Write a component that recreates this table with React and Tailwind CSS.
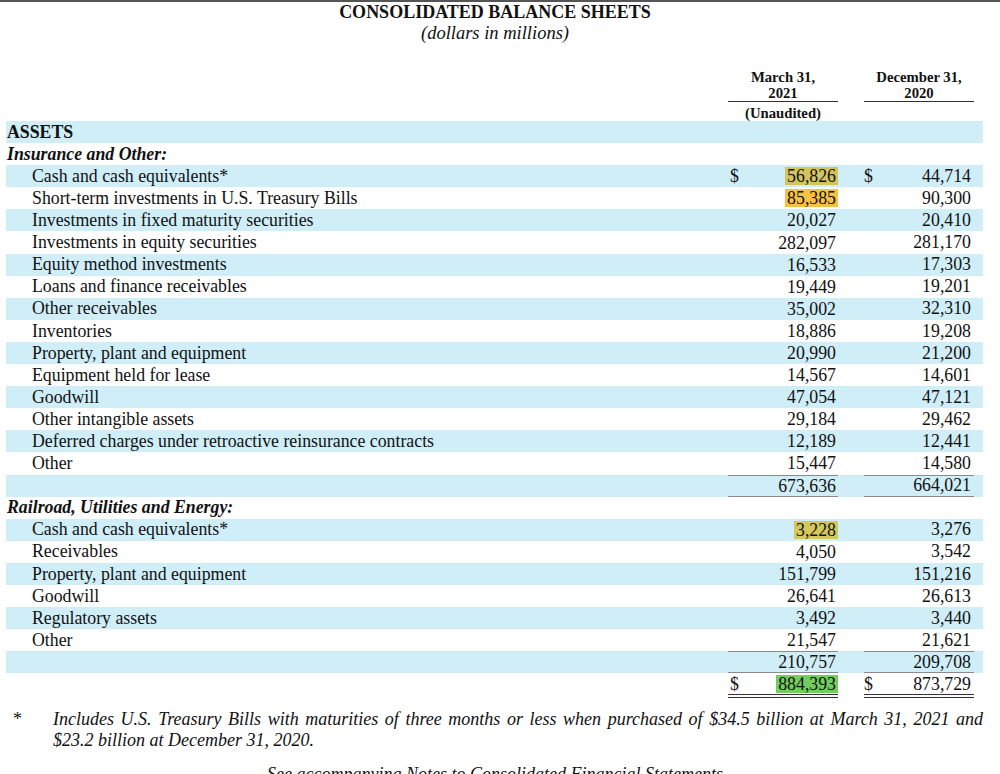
const serif = { fontFamily: '"Liberation Serif", "Times New Roman", serif' };

const insurance = [
  ["Cash and cash equivalents*", "56,826", "44,714", true, "bg-[#d3c45c]"],
  ["Short-term investments in U.S. Treasury Bills", "85,385", "90,300", false, "bg-[#f6c244]"],
  ["Investments in fixed maturity securities", "20,027", "20,410"],
  ["Investments in equity securities", "282,097", "281,170"],
  ["Equity method investments", "16,533", "17,303"],
  ["Loans and finance receivables", "19,449", "19,201"],
  ["Other receivables", "35,002", "32,310"],
  ["Inventories", "18,886", "19,208"],
  ["Property, plant and equipment", "20,990", "21,200"],
  ["Equipment held for lease", "14,567", "14,601"],
  ["Goodwill", "47,054", "47,121"],
  ["Other intangible assets", "29,184", "29,462"],
  ["Deferred charges under retroactive reinsurance contracts", "12,189", "12,441"],
  ["Other", "15,447", "14,580"],
];

const railroad = [
  ["Cash and cash equivalents*", "3,228", "3,276", false, "bg-[#d4c75d]"],
  ["Receivables", "4,050", "3,542"],
  ["Property, plant and equipment", "151,799", "151,216"],
  ["Goodwill", "26,641", "26,613"],
  ["Regulatory assets", "3,492", "3,440"],
  ["Other", "21,547", "21,621"],
];

// one line of the table: label + two money columns
function Row({ label, a, b, blue, dollar, hl, indent, bold, lines, double }) {
  const colLine = lines ? "border-t border-b border-[#8a8a8a]" : "";
  const dbl = double ? "border-b border-[#333] shadow-[0_2px_0_#fff,0_3px_0_#333]" : "";
  return (
    <div className={`flex h-[22.1px] items-center text-[17.8px] text-[#111] ${blue ? "bg-[#d0eef8]" : ""}`}>
      <div
        className={`w-[722px] whitespace-nowrap ${indent ? "pl-[26px]" : "pl-[1px]"} ${bold || ""}`}
      >
        {label}
      </div>
      <div className={`w-[110px] h-full flex items-center justify-between ${colLine} ${dbl}`}>
        <span className="pl-[2px]">{dollar ? "$" : ""}</span>
        {a && (
          <span className={`pr-[2px] pl-[2px] leading-[18px] ${hl || ""}`}>{a}</span>
        )}
      </div>
      <div className="w-[26px]" />
      <div className={`w-[110px] h-full flex items-center justify-between ${colLine} ${dbl}`}>
        <span>{dollar ? "$" : ""}</span>
        {b && <span className="pr-[3px]">{b}</span>}
      </div>
      <div className="w-[9px]" />
    </div>
  );
}

export default function App() {
  let n = 0;
  const stripe = () => n++ % 2 === 0;

  return (
    <div className="w-[1000px] h-[774px] overflow-hidden bg-white border-t-2 border-[#555]" style={serif}>
      {/* Titulo */}
      <div className="text-center text-[#111]">
        <div className="font-bold text-[18px] leading-[20px] mr-[10px]">CONSOLIDATED BALANCE SHEETS</div>
        <div className="italic text-[18.5px] leading-[22px] mr-[10px]">(dollars in millions)</div>
      </div>

      {/* cabecera de columnas */}
      <div className="flex mt-[25px] ml-[6px] text-[14.7px] font-bold leading-[16px] text-[#111]">
        <div className="w-[722px]" />
        <div className="w-[110px] text-center">
          <div>March 31,</div>
          <div className="border-b border-[#333]">2021</div>
          <div className="mt-[3px]">(Unaudited)</div>
        </div>
        <div className="w-[26px]" />
        <div className="w-[110px] text-center">
          <div>December 31,</div>
          <div className="border-b border-[#333]">2020</div>
        </div>
      </div>

      <div className="ml-[6px] w-[977px]">
        <Row label="ASSETS" blue={stripe()} bold="font-bold" />
        <Row label="Insurance and Other:" blue={stripe()} bold="font-bold italic" />
        {insurance.map(([label, a, b, dollar, hl]) => (
          <Row key={label} label={label} a={a} b={b} dollar={dollar} hl={hl} indent blue={stripe()} />
        ))}
        <Row a="673,636" b="664,021" blue={stripe()} lines />
        <Row label="Railroad, Utilities and Energy:" blue={stripe()} bold="font-bold italic" />
        {railroad.map(([label, a, b, dollar, hl]) => (
          <Row key={label + a} label={label} a={a} b={b} dollar={dollar} hl={hl} indent blue={stripe()} />
        ))}
        <Row a="210,757" b="209,708" blue={stripe()} lines />
        <Row a="884,393" b="873,729" dollar hl="bg-[#72cd5e]" double />
      </div>

      {/* nota al pie */}
      <div className="flex mt-[14px] text-[18px] leading-[21px] italic text-[#111]">
        <div className="w-[53px] pl-[13px] not-italic">*</div>
        <p className="w-[930px] text-justify">
          Includes U.S. Treasury Bills with maturities of three months or less when purchased of $34.5 billion at March 31, 2021 and $23.2 billion at December 31, 2020.
        </p>
      </div>
      <div className="mt-[13px] text-center italic text-[18px] leading-[21px] mr-[10px] text-[#111]">
        See accompanying Notes to Consolidated Financial Statements
      </div>
    </div>
  );
}
